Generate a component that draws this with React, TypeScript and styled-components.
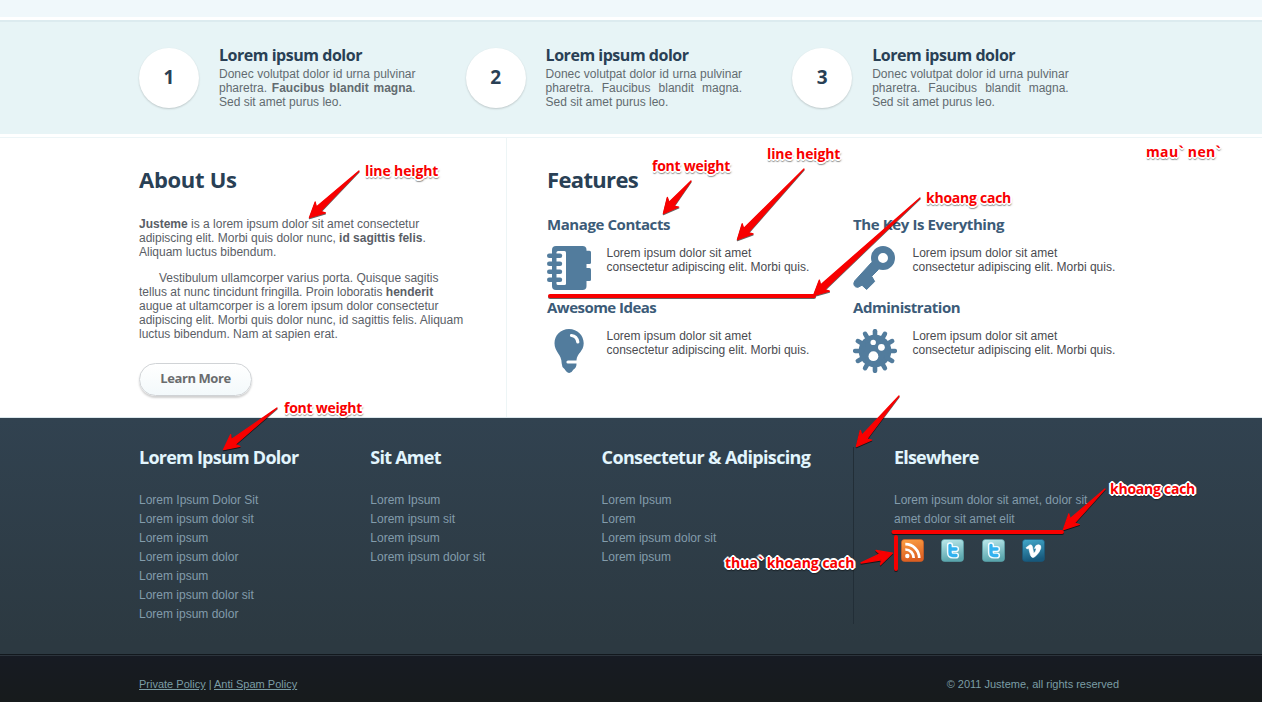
import React from 'react';
import styled, { createGlobalStyle } from 'styled-components';

const Global = createGlobalStyle`
  * { box-sizing: border-box; }
  body { margin: 0; background: #fff; font: 12px/14px "Liberation Sans", Arial, sans-serif; overflow: hidden; }
  h2, h3, p, ul { margin: 0; padding: 0; }
  ul { list-style: none; }
`;

const heading = '"Open Sans", "Noto Sans", sans-serif';

const Page = styled.div`
  position: relative;
  width: 1262px;
  height: 702px;
  overflow: hidden;
  display: flex;
  flex-direction: column;
`;

const TopStrip = styled.div`
  height: 20px;
  background: #f0f8fb;
  border-bottom: 3px solid #fff;
`;

const Steps = styled.section`
  height: 114px;
  padding: 26px 0 0 139px;
  background: #e7f4f6;
  border-top: 2px solid #dcebef;
  display: grid;
  grid-template-columns: repeat(3, 326.6px);
`;

const Step = styled.div`
  display: flex;
  gap: 20px;
`;

const Circle = styled.div`
  width: 60px;
  height: 60px;
  border-radius: 50%;
  background: #fff;
  box-shadow: 0 1px 2px rgba(0, 0, 0, 0.18);
  color: #294055;
  font: 700 19px/58px ${heading};
  text-align: center;
`;

const StepBody = styled.div`
  width: 196.5px;
  margin-top: -4px;
  color: #626b70;
`;

const StepTitle = styled.h3`
  font: 700 16px/22px ${heading};
  letter-spacing: -0.47px;
  color: #294055;
  white-space: nowrap;
  height: 23px;
`;

const Line = styled.div<{ $justify?: boolean }>`
  white-space: nowrap;
  text-align-last: ${p => (p.$justify ? 'justify' : 'left')};
`;

const Main = styled.section`
  margin-top: 3px;
  height: 281px;
  border-top: 1px solid #edf5f7;
  border-bottom: 1px solid #dbe7ec;
  display: grid;
  grid-template-columns: 507px 1fr;
`;

const About = styled.div`
  padding: 26px 0 0 139px;
  border-right: 1px solid #edf5f6;
  color: #5a5e66;
`;

const SectionTitle = styled.h2<{ $ls: number }>`
  font: 700 22px/30px ${heading};
  letter-spacing: ${p => p.$ls}px;
  color: #294055;
  white-space: nowrap;
`;

const Paragraph = styled.p<{ $top: number; $indent?: boolean }>`
  margin-top: ${p => p.$top}px;
  text-indent: ${p => (p.$indent ? 20 : 0)}px;
  white-space: nowrap;
`;

const Button = styled.button`
  margin-top: 22px;
  display: block;
  width: 113px;
  height: 33px;
  padding: 0 0 3px;
  border: 1px solid #d0d3d6;
  border-radius: 17px;
  background: linear-gradient(#fff, #f3f9fb);
  box-shadow: 0 2px 2px rgba(0, 0, 0, 0.18);
  color: #6a6c6e;
  font: 700 13px/26px ${heading};
  letter-spacing: -0.4px;
`;

const Features = styled.div`
  padding: 26px 0 0 40px;
`;

const FeatureGrid = styled.div`
  margin-top: 19px;
  display: grid;
  grid-template-columns: 306px 300px;
  grid-auto-rows: 83px;
`;

const FeatureTitle = styled.h3<{ $ls: number }>`
  font: 700 15px/22px ${heading};
  letter-spacing: ${p => p.$ls}px;
  color: #3c5b78;
  height: 33px;
  white-space: nowrap;
`;

const FeatureRow = styled.div`
  display: flex;
  gap: 15.5px;
  color: #4a4b50;
  white-space: nowrap;
  svg { flex: none; }
`;

const Footer = styled.footer`
  height: 236px;
  padding: 29px 0 0 139px;
  background: linear-gradient(#314250, #2c3941 95%);
  display: grid;
  grid-template-columns: 231.3px 231.3px 251.4px 300px;
`;

const FooterCol = styled.div<{ $divided?: boolean }>`
  height: 177px;
  padding-left: ${p => (p.$divided ? 40 : 0)}px;
  border-left: ${p => (p.$divided ? '1px solid #222e37' : '0')};
  white-space: nowrap;
  color: #839cab;
  line-height: 19px;
`;

const FooterTitle = styled.h3<{ $ls: number }>`
  font: 700 18px/24px ${heading};
  letter-spacing: ${p => p.$ls}px;
  color: #e2f5fd;
  margin: -2px 0 22px;
`;

const Social = styled.div`
  display: flex;
  gap: 17.5px;
  padding: 10px 0 0 7px;
`;

const Bottom = styled.div`
  height: 48px;
  padding: 22px 143px 0 139px;
  border-top: 1px solid #12181d;
  background: linear-gradient(#171b23, #171b1c);
  box-shadow: inset 0 1px #2c343c;
  display: flex;
  justify-content: space-between;
  color: #7b9da5;
  font-size: 11px;
  line-height: 14px;
  a { color: inherit; text-decoration: underline; text-underline-offset: 1px; }
`;

const Marks = styled.svg`
  position: absolute;
  inset: 0;
  filter: drop-shadow(0 1px 0.5px rgba(0, 0, 0, 0.6));
`;

const Note = styled.span<{ $x: number; $y: number; $ls?: number }>`
  position: absolute;
  left: ${p => p.$x}px;
  top: ${p => p.$y}px;
  font: 700 14px/18px ${heading};
  letter-spacing: ${p => p.$ls ?? 0}px;
  color: #f80000;
  white-space: pre;
  text-shadow: -1px -1px #fff, 1px -1px #fff, -1px 1px #fff, 1px 1px #fff, 0 -2px #fff, 2px 0 #fff,
    -2px 0 #fff, 0 2px #fff, 0 3px 1px rgba(0, 0, 0, 0.35), 1px 2px 2px rgba(0, 0, 0, 0.5);
`;

const blue = '#527c9d';

const BookIcon = () => (
  <svg width="44" height="44" viewBox="0 0 44 44">
    <rect x="5" width="34.5" height="44" rx="4" fill={blue} />
    <rect x="36" y="4.8" width="8" height="13.2" rx="1.5" fill={blue} />
    <rect x="36" y="22" width="8" height="13" rx="1.5" fill={blue} />
    <path d="M11 5h6.500q1.500 0 1.500 1.500v31q0 1.500-1.500 1.500h-6.500q-1.500 0-1.500-1.500v-31q0-1.500 1.500-1.500z" fill="#fff" />
    {[9.8, 17.8, 25.8, 33.8].map(y => (
      <path key={y} d={`M2.200 ${y}H13`} stroke={blue} strokeWidth="4.400" strokeLinecap="round" />
    ))}
  </svg>
);

const BulbIcon = () => (
  <svg width="44" height="44" viewBox="0 0 44 44">
    <path
      d="M22 0C13.500 0 7.500 6.500 7.500 14.200C7.500 23 14.700 25 14.700 34.500Q14.700 38 17.500 40Q20 44 22.300 44Q24.500 44 26.500 40.500Q29.500 38.500 29.500 35V31C30 24 36.700 22.500 36.700 14.200C36.700 6.500 30.500 0 22 0z"
      fill={blue}
    />
    <path d="M24.500 6.500Q29.800 7 30.800 13" fill="none" stroke="#fff" strokeWidth="3.200" strokeLinecap="round" />
    <path d="M21 33H31" stroke="#fff" strokeWidth="3.200" strokeLinecap="round" />
  </svg>
);

const KeyIcon = () => (
  <svg width="44" height="44" viewBox="0 0 44 44">
    <circle cx="30" cy="12" r="8.500" fill="none" stroke={blue} strokeWidth="7" />
    <path
      d="M18.500 16.500L1.800 34.800Q0 37.500 1.200 39.500T5 41.300L9 39.200L13.600 43.500L21.700 35.500L18.700 30.300L25.500 23.500z"
      fill={blue}
      stroke={blue}
      strokeLinejoin="round"
    />
  </svg>
);

const GearIcon = () => (
  <svg width="44" height="44" viewBox="0 0 44 44">
    <circle cx="22" cy="22" r="16.300" fill={blue} />
    {Array.from({ length: 12 }, (_, i) => (
      <path key={i} d="M22 9V2.200" stroke={blue} strokeWidth="4.600" strokeLinecap="round" transform={`rotate(${i * 30} 22 22)`} />
    ))}
    <circle cx="20.200" cy="13.400" r="2.700" fill="#fff" />
    <circle cx="28.400" cy="18.300" r="3.400" fill="#fff" />
    <circle cx="20.400" cy="27.200" r="4.900" fill="#fff" />
  </svg>
);

const Badge = ({ id, from, to, children }: { id: string; from: string; to: string; children: React.ReactNode }) => (
  <svg width="23" height="23" viewBox="0 0 23 23">
    <defs>
      <linearGradient id={id} x1="0" y1="0" x2="0.2" y2="1">
        <stop offset="0" stopColor={from} />
        <stop offset="1" stopColor={to} />
      </linearGradient>
    </defs>
    <rect x="0.500" y="0.500" width="22" height="22" rx="3" fill={`url(#${id})`} stroke={to} strokeOpacity="0.6" />
    {children}
  </svg>
);

const RssIcon = () => (
  <Badge id="rss" from="#fba043" to="#dc5f22">
    <circle cx="6.300" cy="17" r="2.200" fill="#fff" />
    <path d="M4.300 10.500A8.300 8.300 0 0 1 12.700 19M4.300 5.200A13.700 13.700 0 0 1 18.200 19" fill="none" stroke="#fff" strokeWidth="2.700" />
  </Badge>
);

const TwitterIcon = ({ id }: { id: string }) => (
  <Badge id={id} from="#bdeaed" to="#5aa6ad">
    <path d="M9 6.300V13.500Q9 16.500 12 16.500H15M9 10H15" fill="none" stroke="#f2fcff" strokeWidth="6.200" strokeLinecap="round" strokeLinejoin="round" />
    <path d="M9 6.300V13.500Q9 16.500 12 16.500H15M9 10H15" fill="none" stroke="#32b2ef" strokeWidth="3.300" strokeLinecap="round" strokeLinejoin="round" />
  </Badge>
);

const VimeoIcon = () => (
  <Badge id="vimeo" from="#43a9cb" to="#17597c">
    <path
      d="M4 8.700L7.700 6Q9.800 5 10.500 8L11.500 13.300Q12 14.500 13 13Q14.500 10.500 14 9.500Q13.500 9 12.500 9.500Q13.300 5.600 16.500 5.700Q19.500 5.900 18.800 9.200Q17.500 14 12.500 18Q9.600 19.600 8.500 16.300L6.900 10.200Q6.500 9 5 9.900z"
      fill="#fff"
      stroke="#fff"
      strokeWidth="0.600"
    />
  </Badge>
);

type ArrowProps = { from: [number, number]; to: [number, number]; size?: number };

const Arrow = ({ from, to, size = 1 }: ArrowProps) => {
  const dx = to[0] - from[0];
  const dy = to[1] - from[1];
  const len = Math.hypot(dx, dy);
  const at = (back: number, side: number) =>
    `${to[0] - (dx / len) * back - (dy / len) * side},${to[1] - (dy / len) * back + (dx / len) * side}`;
  const pts = [
    at(0.5, 0), at(15.5 * size, 7.5 * size), at(13 * size, 3.1 * size), at(len, 0.1),
    at(len, -0.1), at(13 * size, -3.1 * size), at(15.5 * size, -7.5 * size),
  ];
  return <polygon points={pts.join(' ')} fill="#f80000" stroke="#f80000" strokeWidth="1.200" strokeLinejoin="round" />;
};

const steps = [
  ['Donec volutpat dolor id urna pulvinar', <>pharetra. <b>Faucibus blandit magna</b>.</>],
  ['Donec volutpat dolor id urna pulvinar', 'pharetra. Faucibus blandit magna.'],
  ['Donec volutpat dolor id urna pulvinar', 'pharetra. Faucibus blandit magna.'],
];

const features = [
  { title: 'Manage Contacts', ls: -0.42, Icon: BookIcon },
  { title: 'The Key Is Everything', ls: -0.39, Icon: KeyIcon },
  { title: 'Awesome Ideas', ls: -0.53, Icon: BulbIcon },
  { title: 'Administration', ls: -0.46, Icon: GearIcon },
];

const links = [
  { title: 'Lorem Ipsum Dolor', ls: -0.76, items: ['Lorem Ipsum Dolor Sit', 'Lorem ipsum dolor sit', 'Lorem ipsum', 'Lorem ipsum dolor', 'Lorem ipsum', 'Lorem ipsum dolor sit', 'Lorem ipsum dolor'] },
  { title: 'Sit Amet', ls: -0.75, items: ['Lorem Ipsum', 'Lorem ipsum sit', 'Lorem ipsum', 'Lorem ipsum dolor sit'] },
  { title: 'Consectetur & Adipiscing', ls: -0.65, items: ['Lorem Ipsum', 'Lorem', 'Lorem ipsum dolor sit', 'Lorem ipsum'] },
];

export default function App() {
  return (
    <Page>
      <Global />
      <TopStrip />
      <Steps>
        {steps.map(([first, second], i) => (
          <Step key={i}>
            <Circle>{i + 1}</Circle>
            <StepBody>
              <StepTitle>Lorem ipsum dolor</StepTitle>
              <Line $justify>{first}</Line>
              <Line $justify>{second}</Line>
              <Line>Sed sit amet purus leo.</Line>
            </StepBody>
          </Step>
        ))}
      </Steps>
      <Main>
        <About>
          <SectionTitle $ls={-0.3}>About Us</SectionTitle>
          <Paragraph $top={23}>
            <b>Justeme</b> is a lorem ipsum dolor sit amet consectetur<br />
            adipiscing elit. Morbi quis dolor nunc, <b>id sagittis felis</b>.<br />
            Aliquam luctus bibendum.
          </Paragraph>
          <Paragraph $top={12} $indent>
            Vestibulum ullamcorper varius porta. Quisque sagitis<br />
            tellus at nunc tincidunt fringilla. Proin loboratis <b>henderit</b><br />
            augue at ultamcorper is a lorem ipsum dolor consectetur<br />
            adipiscing elit. Morbi quis dolor nunc, id sagittis felis. Aliquam<br />
            luctus bibendum. Nam at sapien erat.
          </Paragraph>
          <Button>Learn More</Button>
        </About>
        <Features>
          <SectionTitle $ls={-0.65}>Features</SectionTitle>
          <FeatureGrid>
            {features.map(({ title, ls, Icon }) => (
              <div key={title}>
                <FeatureTitle $ls={ls}>{title}</FeatureTitle>
                <FeatureRow>
                  <Icon />
                  <p>Lorem ipsum dolor sit amet<br />consectetur adipiscing elit. Morbi quis.</p>
                </FeatureRow>
              </div>
            ))}
          </FeatureGrid>
        </Features>
      </Main>
      <Footer>
        {links.map(({ title, ls, items }) => (
          <FooterCol key={title}>
            <FooterTitle $ls={ls}>{title}</FooterTitle>
            <ul>{items.map((t, i) => <li key={i}>{t}</li>)}</ul>
          </FooterCol>
        ))}
        <FooterCol $divided>
          <FooterTitle $ls={-0.8}>Elsewhere</FooterTitle>
          <p>Lorem ipsum dolor sit amet, dolor sit<br />amet dolor sit amet elit</p>
          <Social>
            <RssIcon />
            <TwitterIcon id="tw1" />
            <TwitterIcon id="tw2" />
            <VimeoIcon />
          </Social>
        </FooterCol>
      </Footer>
      <Bottom>
        <span><a>Private Policy</a> | <a>Anti Spam Policy</a></span>
        <span>© 2011 Justeme, all rights reserved</span>
      </Bottom>

      <Marks width="1262" height="702" viewBox="0 0 1262 702">
        <Arrow from={[359, 171]} to={[309, 218]} />
        <Arrow from={[691, 181]} to={[663, 214]} />
        <Arrow from={[804, 169]} to={[737, 240]} />
        <Arrow from={[920, 198]} to={[813, 296]} />
        <Arrow from={[277, 408]} to={[223, 450]} />
        <Arrow from={[899, 396]} to={[856, 447]} />
        <Arrow from={[1105, 489]} to={[1063, 530]} />
        <Arrow from={[861, 563]} to={[893, 553]} />
        <path d="M550 296H814M893.500 532H1062M896 537V569" stroke="#f80000" strokeWidth="4" strokeLinecap="round" />
      </Marks>
      <Note $x={365} $y={162} $ls={-0.12}>line height</Note>
      <Note $x={652} $y={157} $ls={-0.25}>font weight</Note>
      <Note $x={767} $y={145} $ls={-0.12}>line height</Note>
      <Note $x={926} $y={189} $ls={-0.25}>khoang cach</Note>
      <Note $x={1146} $y={143} $ls={0.35}>mau` nen`</Note>
      <Note $x={284} $y={399} $ls={-0.25}>font weight</Note>
      <Note $x={1110} $y={480} $ls={-0.25}>khoang cach</Note>
      <Note $x={725} $y={554}>thua` khoang cach</Note>
    </Page>
  );
}
